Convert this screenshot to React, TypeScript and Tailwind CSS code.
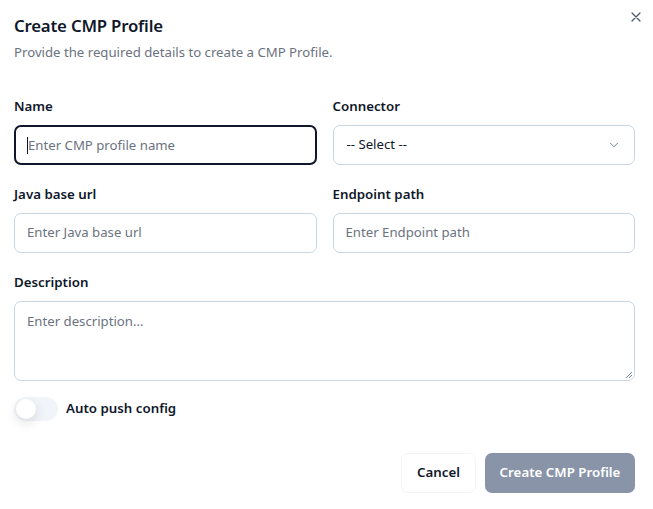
import React from "react";

export default function App() {
  return (
    <div
      className="w-[653px] h-[509px] bg-white relative overflow-hidden text-[#0f172a]"
      style={{ fontFamily: '"Noto Sans", "Open Sans", sans-serif' }}
    >
      <button className="absolute right-[11px] top-[11px] w-[12px] h-[12px] text-[#475569]">
        <svg viewBox="0 0 24 24" width="12" height="12" fill="none" stroke="currentColor" strokeWidth="2.4" strokeLinecap="round">
          <path d="M4 4l16 16M20 4L4 20" />
        </svg>
      </button>
      <div className="pl-[14px] pr-[18px] pt-[14px]">
        <h2 className="text-[16.8px] leading-[24px] font-semibold tracking-[-0.2px]">Create CMP Profile</h2>
        <p className="text-[13.2px] leading-[20px] text-[#6b7280] mt-[4px]">Provide the required details to create a CMP Profile.</p>

        <div className="grid grid-cols-2 gap-x-[16px] mt-[34px]">
          <div className="flex flex-col">
            <label className="text-[13.3px] leading-[20px] font-semibold">Name</label>
            <div className="mt-[9px] h-[40px] rounded-[7px] border-2 border-[#0f172a] flex items-center px-[11px] pt-px">
              <span className="w-px h-[17px] bg-[#0f172a]" />
              <span className="text-[13.2px] text-[#6b7280]">Enter CMP profile name</span>
            </div>
          </div>
          <div className="flex flex-col">
            <label className="text-[13.3px] leading-[20px] font-semibold">Connector</label>
            <div className="mt-[9px] h-[40px] rounded-[7px] border border-[#cbd5e1] flex items-center justify-between px-[13px]">
              <span className="text-[13.2px] text-[#0f172a]">-- Select --</span>
              <svg viewBox="0 0 24 24" width="14" height="14" fill="none" stroke="#64748b" strokeWidth="1.6" strokeLinecap="round" strokeLinejoin="round">
                <path d="M6 9l6 6 6-6" />
              </svg>
            </div>
          </div>

          <div className="flex flex-col mt-[19px]">
            <label className="text-[13.3px] leading-[20px] font-semibold">Java base url</label>
            <div className="mt-[9px] h-[40px] rounded-[7px] border border-[#cbd5e1] flex items-center px-[12px]">
              <span className="text-[13.2px] text-[#6b7280]">Enter Java base url</span>
            </div>
          </div>
          <div className="flex flex-col mt-[19px]">
            <label className="text-[13.3px] leading-[20px] font-semibold">Endpoint path</label>
            <div className="mt-[9px] h-[40px] rounded-[7px] border border-[#cbd5e1] flex items-center px-[12px]">
              <span className="text-[13.2px] text-[#6b7280]">Enter Endpoint path</span>
            </div>
          </div>
        </div>

        <div className="flex flex-col mt-[19px]">
          <label className="text-[13.3px] leading-[20px] font-semibold">Description</label>
          <div className="relative mt-[9px] h-[80px] rounded-[7px] border border-[#cbd5e1] px-[12px] pt-[6px]">
            <span className="text-[13.2px] text-[#6b7280]">Enter description...</span>
            <svg className="absolute right-[1px] bottom-[1px]" width="8" height="8" viewBox="0 0 8 8" stroke="#64748b" strokeWidth="0.9">
              <path d="M7 1L1 7M7 4L4 7" />
            </svg>
          </div>
        </div>

        <div className="flex items-center mt-[16px] gap-[8px]">
          <div className="w-[44px] h-[24px] rounded-full bg-[#f1f5f9] relative">
            <div className="absolute left-[2px] top-[2px] w-[20px] h-[20px] rounded-full bg-white shadow-[0_4px_12px_rgba(0,0,0,0.12)]" />
          </div>
          <span className="text-[13.3px] font-semibold">Auto push config</span>
        </div>

        <div className="flex justify-end gap-[9px] mt-[32px]">
          <button className="h-[40px] w-[75px] rounded-[7px] border border-[#f1f5f9] bg-white text-[13.3px] font-semibold text-[#0f172a]">
            Cancel
          </button>
          <button className="h-[40px] w-[150px] rounded-[7px] bg-[#8994a8] text-[13.3px] font-semibold text-white">
            Create CMP Profile
          </button>
        </div>
      </div>
    </div>
  );
}
